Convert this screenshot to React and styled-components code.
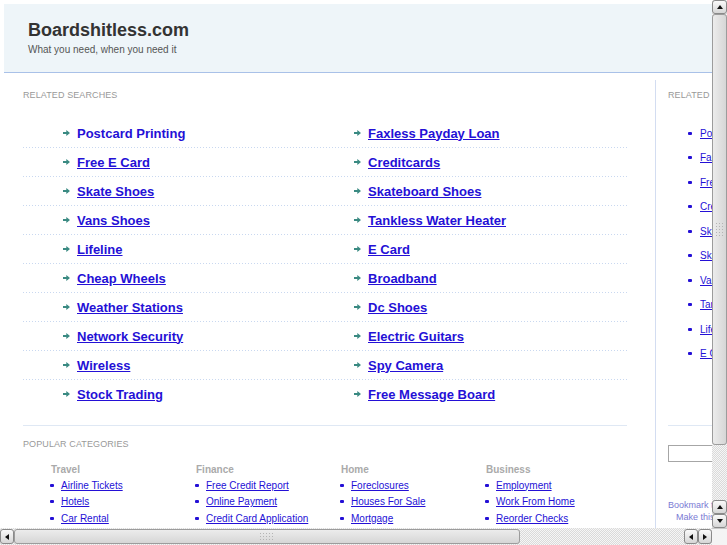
import React from 'react'
import styled, { createGlobalStyle } from 'styled-components'

const GlobalStyle = createGlobalStyle`
    html, body {
        margin: 0;
        padding: 0;
        overflow: hidden;
        background: #fff;
    }
    body {
        font-family: "Liberation Sans", Arial, sans-serif;
    }
`

const related = [
    ['Postcard Printing', 'Faxless Payday Loan'],
    ['Free E Card', 'Creditcards'],
    ['Skate Shoes', 'Skateboard Shoes'],
    ['Vans Shoes', 'Tankless Water Heater'],
    ['Lifeline', 'E Card'],
    ['Cheap Wheels', 'Broadband'],
    ['Weather Stations', 'Dc Shoes'],
    ['Network Security', 'Electric Guitars'],
    ['Wireless', 'Spy Camera'],
    ['Stock Trading', 'Free Message Board'],
]

const categories = [
    { title: 'Travel', items: ['Airline Tickets', 'Hotels', 'Car Rental'] },
    { title: 'Finance', items: ['Free Credit Report', 'Online Payment', 'Credit Card Application'] },
    { title: 'Home', items: ['Foreclosures', 'Houses For Sale', 'Mortgage'] },
    { title: 'Business', items: ['Employment', 'Work From Home', 'Reorder Checks'] },
]

const sideLinks = [
    'Postcard Printing', 'Faxless Payday Loan', 'Free E Card', 'Creditcards', 'Skate Shoes',
    'Skateboard Shoes', 'Vans Shoes', 'Tankless Water Heater', 'Lifeline', 'E Card',
]

const Arrow = () => (
    <svg width="7" height="6" viewBox="0 0 7 6">
        <path d="M0 2h3.3V0L7 3 3.3 6V4H0z" fill="#3a8a82" />
    </svg>
)

const App = () => {
    return (
        <>
            <GlobalStyle />
            <Page>
                <Header>
                    <Title>Boardshitless.com</Title>
                    <Tagline>What you need, when you need it</Tagline>
                </Header>
                <Columns>
                    <Main>
                        <SectionLabel>Related Searches</SectionLabel>
                        <LinkTable>
                            {related.map((pair, i) => (
                                <LinkRow key={i}>
                                    {pair.map((label, j) => (
                                        <LinkCell key={label}>
                                            <Arrow />
                                            <MainLink href="#" $plain={i === 0 && j === 0}>{label}</MainLink>
                                        </LinkCell>
                                    ))}
                                </LinkRow>
                            ))}
                        </LinkTable>
                        <Popular>
                            <SectionLabel>Popular Categories</SectionLabel>
                            <CatGrid>
                                {categories.map(cat => (
                                    <div key={cat.title}>
                                        <CatTitle>{cat.title}</CatTitle>
                                        {cat.items.map(item => (
                                            <SmallItem key={item}>
                                                <Dot />
                                                <SmallLink href="#">{item}</SmallLink>
                                            </SmallItem>
                                        ))}
                                    </div>
                                ))}
                            </CatGrid>
                        </Popular>
                    </Main>
                    <Sidebar>
                        <SectionLabel>Related Searches</SectionLabel>
                        <SideList>
                            {sideLinks.map(item => (
                                <SideItem key={item}>
                                    <Dot />
                                    <SmallLink href="#">{item}</SmallLink>
                                </SideItem>
                            ))}
                        </SideList>
                        <SideRule />
                        <SearchBox type="text" />
                        <Bookmark>Bookmark this page</Bookmark>
                        <Bookmark $indent>Make this your homepage</Bookmark>
                    </Sidebar>
                </Columns>
            </Page>

            <VScroll>
                <ScrollBtn><Tri $dir="up" /></ScrollBtn>
                <VThumb><Grip $vertical /></VThumb>
                <Track />
                <ScrollBtn><Tri $dir="up" /></ScrollBtn>
                <ScrollBtn><Tri $dir="down" /></ScrollBtn>
            </VScroll>
            <HScroll>
                <ScrollBtn $h><Tri $dir="left" /></ScrollBtn>
                <HThumb><Grip /></HThumb>
                <Track />
                <ScrollBtn $h><Tri $dir="left" /></ScrollBtn>
                <ScrollBtn $h><Tri $dir="right" /></ScrollBtn>
            </HScroll>
            <Corner />
        </>
    )
}

export default App

const Page = styled.div`
    width: 1000px;
    padding: 4px 0 0 4px;
`
const Header = styled.div`
    height: 69px;
    box-sizing: border-box;
    padding: 15px 0 0 24px;
    background: #eef5f9;
    border-bottom: 1px solid #a9c1e8;
`
const Title = styled.div`
    font-size: 18px;
    line-height: 22px;
    font-weight: bold;
    color: #333;
`
const Tagline = styled.div`
    margin-top: 2px;
    font-size: 10px;
    line-height: 13px;
    color: #555;
`
const Columns = styled.div`
    display: flex;
    align-items: flex-start;
`
const Main = styled.div`
    width: 652px;
    box-sizing: border-box;
    margin-top: 7px;
    padding: 10px 28px 40px 19px;
    border-right: 1px solid #d3ddf1;
`
const SectionLabel = styled.div`
    font-size: 9px;
    line-height: 11px;
    letter-spacing: 0.1px;
    text-transform: uppercase;
    color: #999;
    white-space: nowrap;
`
const LinkTable = styled.div`
    margin: 18px 0 17px;
`
const LinkRow = styled.div`
    display: grid;
    grid-template-columns: 291px 1fr;
    height: 29px;
    box-sizing: border-box;
    padding-bottom: 1px;
    background-image: linear-gradient(to right, #c9d8f0 1px, transparent 1px);
    background-size: 3px 1px;
    background-repeat: repeat-x;
    background-position: left bottom;
    &:last-child {
        background: none;
        height: 28px;
        padding-bottom: 0;
    }
`
const LinkCell = styled.div`
    display: flex;
    align-items: center;
    gap: 7px;
    padding-left: 40px;
`
const MainLink = styled.a`
    font-size: 13px;
    font-weight: bold;
    color: #2410d6;
    text-decoration: ${p => (p.$plain ? 'none' : 'underline')};
    white-space: nowrap;
`
const Popular = styled.div`
    border-top: 1px solid #dfe8f4;
    padding-top: 13px;
`
const CatGrid = styled.div`
    display: grid;
    grid-template-columns: repeat(4, 145px);
    padding-left: 27px;
    margin-top: 13px;
`
const CatTitle = styled.div`
    padding-left: 1px;
    margin-bottom: 1px;
    font-size: 10px;
    line-height: 13px;
    font-weight: bold;
    color: #aaa;
`
const SmallItem = styled.div`
    display: flex;
    align-items: center;
    gap: 7px;
    height: 16.5px;
`
const Dot = styled.span`
    flex: none;
    width: 4px;
    height: 3px;
    border-radius: 1px;
    background: #2410d6;
`
const SmallLink = styled.a`
    font-size: 10px;
    color: #2410d6;
    text-decoration: underline;
    white-space: nowrap;
`
const Sidebar = styled.div`
    width: 300px;
    margin-top: 7px;
    padding: 10px 0 0 12px;
`
const SideList = styled.div`
    margin-top: 19.75px;
    padding-left: 20px;
`
const SideItem = styled(SmallItem)`
    height: 24.5px;
    gap: 8px;
`
const SideRule = styled.div`
    margin-top: 59px;
    border-top: 1px solid #dfe8f4;
`
const SearchBox = styled.input`
    display: block;
    margin: 19px 0 0;
    width: 200px;
    height: 17px;
    box-sizing: border-box;
    border: 1px solid #a6a6a6;
    padding: 0;
`
const Bookmark = styled.div`
    font-size: 9px;
    line-height: 12px;
    color: #7a7ad4;
    white-space: nowrap;
    margin-top: ${p => (p.$indent ? '0' : '37px')};
    padding-left: ${p => (p.$indent ? '8px' : '0')};
`

const track = `
    background-color: #f2f2f2;
    background-image: repeating-conic-gradient(#dadada 0 25%, #f6f6f6 0 50%);
    background-size: 2px 2px;
`
const VScroll = styled.div`
    position: fixed;
    top: 0;
    right: 0;
    width: 15px;
    height: 528px;
    display: flex;
    flex-direction: column;
    ${track}
`
const HScroll = styled.div`
    position: fixed;
    left: 0;
    bottom: 0;
    width: 712px;
    height: 17px;
    box-sizing: border-box;
    padding: 1px 0;
    display: flex;
    ${track}
`
const Corner = styled.div`
    position: fixed;
    right: 0;
    bottom: 0;
    width: 15px;
    height: 17px;
    background: #f4f4f4;
    border-top: 1px solid #c8c8c8;
    box-sizing: border-box;
`
const Track = styled.div`
    flex: 1;
`
const ScrollBtn = styled.div`
    flex: none;
    width: ${p => (p.$h ? '14px' : '15px')};
    height: ${p => (p.$h ? '15px' : '14px')};
    box-sizing: border-box;
    border: 1px solid #8a8a8a;
    border-radius: 3px;
    background: linear-gradient(#fafafa, #d6d6d6);
    display: flex;
    align-items: center;
    justify-content: center;
`
const Tri = styled.span`
    width: 0;
    height: 0;
    border: 3px solid transparent;
    ${p => p.$dir === 'up' && 'border-bottom: 4px solid #111; border-top: none; margin-top: -1px;'}
    ${p => p.$dir === 'down' && 'border-top: 4px solid #111; border-bottom: none;'}
    ${p => p.$dir === 'left' && 'border-right: 4px solid #111; border-left: none;'}
    ${p => p.$dir === 'right' && 'border-left: 4px solid #111; border-right: none;'}
`
const VThumb = styled.div`
    flex: none;
    height: 431px;
    box-sizing: border-box;
    border: 1px solid #9c9c9c;
    border-radius: 3px;
    background: linear-gradient(to right, #ececec, #d6d6d6);
    display: flex;
    align-items: center;
    justify-content: center;
`
const HThumb = styled.div`
    flex: none;
    width: 506px;
    box-sizing: border-box;
    border: 1px solid #9c9c9c;
    border-radius: 3px;
    background: linear-gradient(#ececec, #d6d6d6);
    display: flex;
    align-items: center;
    justify-content: center;
`
const Grip = styled.span`
    width: ${p => (p.$vertical ? '9px' : '16px')};
    height: ${p => (p.$vertical ? '16px' : '9px')};
    background-image: radial-gradient(#b4b4b4 0.8px, transparent 0.9px);
    background-size: 3px 3px;
`
